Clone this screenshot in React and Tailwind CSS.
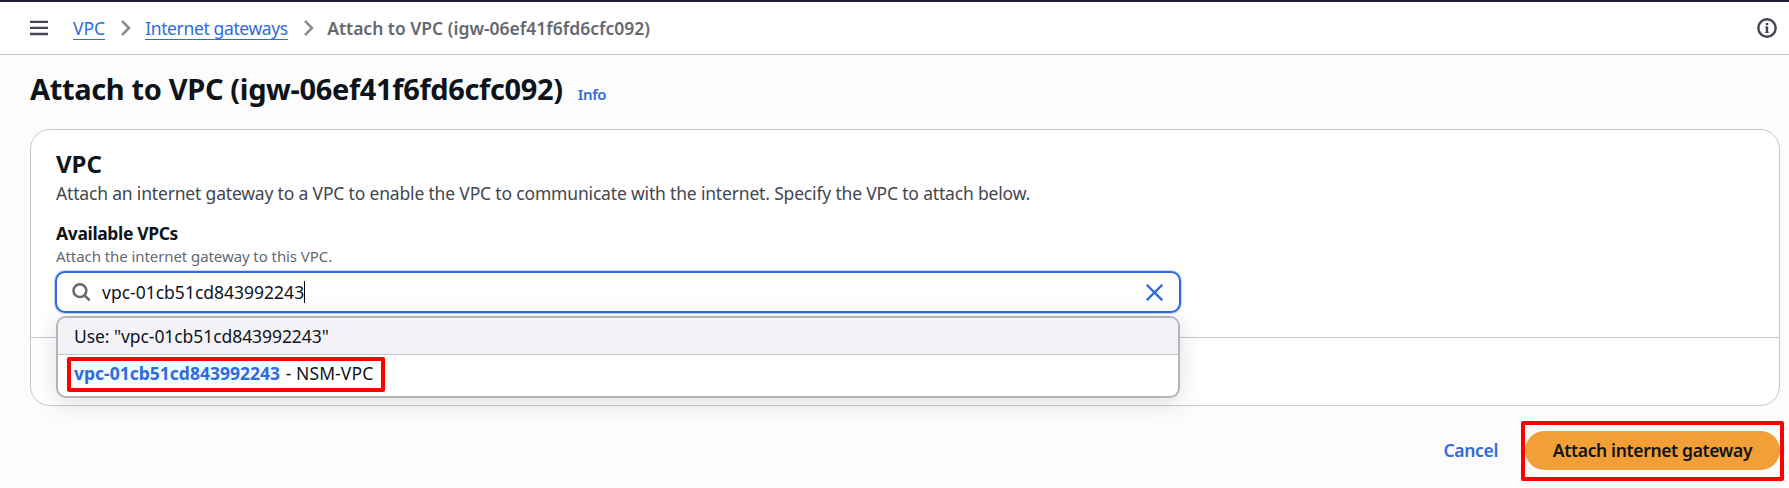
import React from "react";

function MenuIcon() {
  return (
    <svg width="18" height="16" viewBox="0 0 18 16" fill="none" stroke="#424650" strokeWidth="2.3">
      <path d="M0 1.8H18M0 7.9H18M0 14H18" />
    </svg>
  );
}

function Chevron() {
  return (
    <svg width="10" height="16" viewBox="0 0 10 16" fill="none" stroke="#8c8c94" strokeWidth="2.5">
      <path d="M1 1L8 8L1 15" />
    </svg>
  );
}

function InfoIcon() {
  return (
    <svg width="20" height="20" viewBox="0 0 20 20" fill="none" stroke="#424650" strokeWidth="2.4">
      <circle cx="10" cy="10" r="8.7" />
      <path d="M10 8.6V15M10 5V7.2" strokeWidth="2.4" />
      <path d="M8.2 9.2H10M8.2 14.4H11.8" strokeWidth="1" />
    </svg>
  );
}

function SearchIcon() {
  return (
    <svg width="19" height="19" viewBox="0 0 19 19" fill="none" stroke="#656871" strokeWidth="2.5">
      <circle cx="7.9" cy="7.7" r="6.4" />
      <path d="M12.3 12.2L17.6 17.4" />
    </svg>
  );
}

function CloseIcon() {
  return (
    <svg width="17" height="17" viewBox="0 0 17 17" fill="none" stroke="#2f6bdc" strokeWidth="2.3">
      <path d="M0.8 0.8L16.2 16.2M16.2 0.8L0.8 16.2" />
    </svg>
  );
}

function Suggestions() {
  return (
    <div className="absolute left-px top-[45px] z-10 h-[82px] w-[1124px] rounded-[10px] border-2 border-[#b4b4bb] bg-white text-[#0f141a] shadow-[0_5px_25px_1px_rgba(0,7,22,0.12)]">
      <div className="h-[37px] rounded-t-lg border-b border-[#c6c6cd] bg-[#f3f3f7] pl-4 pt-[6px] tracking-[-0.07px]">
        Use: "vpc-01cb51cd843992243"
      </div>
      <div className="pl-4 pt-[6px]">
        <span className="bg-[#f0fbff] font-bold text-[#2f6bdc]">vpc-01cb51cd843992243</span>
        <span className="ml-px tracking-[0.1px]"> - NSM-VPC</span>
      </div>
      <div className="absolute left-[9px] top-[39px] h-[35px] w-[318px] rounded-[2px] border-4 border-[#ff0000]" />
    </div>
  );
}

export default function App() {
  return (
    <div className="flex h-[488px] w-[1789px] flex-col overflow-hidden border-t-2 border-[#1b2130] bg-[#fcfcfd] font-['Noto_Sans',sans-serif] text-[17.5px] leading-[25px] text-[#0f141a]">
      <header className="flex h-[53px] shrink-0 items-center border-b border-[#c6c6cd] bg-white pl-[30px] pr-3">
        <MenuIcon />
        <nav className="ml-[25px] flex items-center">
          <a className="h-[24px] border-b border-[#2f6bdc] leading-[24px] text-[#2f6bdc]">VPC</a>
          <span className="ml-4 mr-[14px]"><Chevron /></span>
          <a className="h-[24px] w-[143px] whitespace-nowrap border-b border-[#2f6bdc] leading-[24px] tracking-[-0.37px] text-[#2f6bdc]">Internet gateways</a>
          <span className="ml-4 mr-[13px]"><Chevron /></span>
          <span className="font-semibold text-[#656871]">Attach to VPC (igw-06ef41f6fd6cfc092)</span>
        </nav>
        <span className="ml-auto"><InfoIcon /></span>
      </header>

      <main className="pl-[30px] pr-[9px]">
        <div className="flex h-[74px] items-baseline pt-[14px]">
          <h1 className="text-[29px] font-bold leading-[40px] tracking-[-0.35px]">Attach to VPC (igw-06ef41f6fd6cfc092)</h1>
          <a className="ml-[15px] text-[15px] font-semibold tracking-[-0.4px] text-[#2f6bdc]">Info</a>
        </div>

        <section className="h-[277px] rounded-[20px] border border-[#c6c6cd] bg-white">
          <div className="h-[208px] border-b border-[#c6c6cd] pl-[25px] pt-[19px]">
            <h2 className="text-[24px] font-bold leading-[30px]">VPC</h2>
            <p className="mt-[2px] whitespace-nowrap tracking-[-0.175px] text-[#424650]">
              Attach an internet gateway to a VPC to enable the VPC to communicate with the internet. Specify the VPC to attach below.
            </p>
            <label className="mt-[15px] block font-bold tracking-[-0.36px]">Available VPCs</label>
            <p className="text-[15px] leading-5 tracking-[-0.075px] text-[#656871]">Attach the internet gateway to this VPC.</p>
            <div className="relative -ml-px mt-[5px] w-[1126px]">
              <div className="flex h-[42px] items-center rounded-[10px] border-2 border-[#2f6bdc] bg-white pl-[15px] pr-4 shadow-[0_0_0_1px_#c5d8f8]">
                <SearchIcon />
                <span className="ml-[11px]">vpc-01cb51cd843992243</span>
                <span className="h-[22px] w-px bg-black" />
                <span className="ml-auto"><CloseIcon /></span>
              </div>
              <Suggestions />
            </div>
          </div>
        </section>

        <div className="flex items-center justify-end pt-[25px] font-semibold">
          <button className="mr-[27px] tracking-[-0.35px] text-[#2f6bdc]">Cancel</button>
          <div className="relative">
            <button className="h-[39px] w-[255px] whitespace-nowrap rounded-full bg-[#f29f38] tracking-[-0.35px]">Attach internet gateway</button>
            <div className="pointer-events-none absolute -left-1 -top-[10px] h-[60px] w-[263px] rounded-[2px] border-4 border-[#ff0000]" />
          </div>
        </div>
      </main>
    </div>
  );
}
